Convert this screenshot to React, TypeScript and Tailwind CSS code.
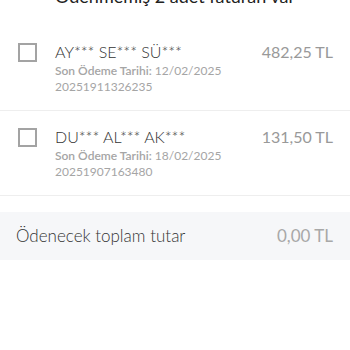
import React from 'react';

const BILLS = [
  { name: 'AY*** SE*** SÜ***', due: '12/02/2025', no: '20251911326235', amount: '482,25 TL' },
  { name: 'DU*** AL*** AK***', due: '18/02/2025', no: '20251907163480', amount: '131,50 TL' },
];

export default function App() {
  return (
    <div className="min-h-[350px] bg-white font-['Lato','Noto_Sans',sans-serif] text-[#333]">
      <div className="flex h-[8px] items-end justify-center overflow-hidden">
        <p className="text-[18px] leading-[24px] text-[#222]">Ödenmemiş 2 adet faturan var</p>
      </div>
      <div className="h-[18px]" />
      {BILLS.map((b) => (
        <div key={b.no} className="flex h-[85px] border-b border-[#eeeeee] pl-[18px] pr-[17px] pt-[16px]">
          <div className="mt-[1px] h-[19px] w-[19px] shrink-0 border-[2.5px] border-[#a3a3a3]" />
          <div className="ml-[18px] flex-1">
            <p className="text-[16px] font-light leading-[20px] text-[#333]">{b.name}</p>
            <p className="mt-[1px] text-[12px] leading-[16px] text-[#a5a5a5]">
              <span className="font-semibold">Son Ödeme Tarihi:</span> {b.due}
            </p>
            <p className="text-[12px] leading-[16px] text-[#a5a5a5]">{b.no}</p>
          </div>
          <p className="text-[16px] leading-[20px] text-[#999]">{b.amount}</p>
        </div>
      ))}
      <div className="mt-[16px] flex h-[48px] items-center justify-between bg-[#f6f7f9] pl-[16px] pr-[17px]">
        <p className="text-[17px] font-light text-[#333]">Ödenecek toplam tutar</p>
        <p className="text-[17px] text-[#a8a8a8]">0,00 TL</p>
      </div>
    </div>
  );
}
